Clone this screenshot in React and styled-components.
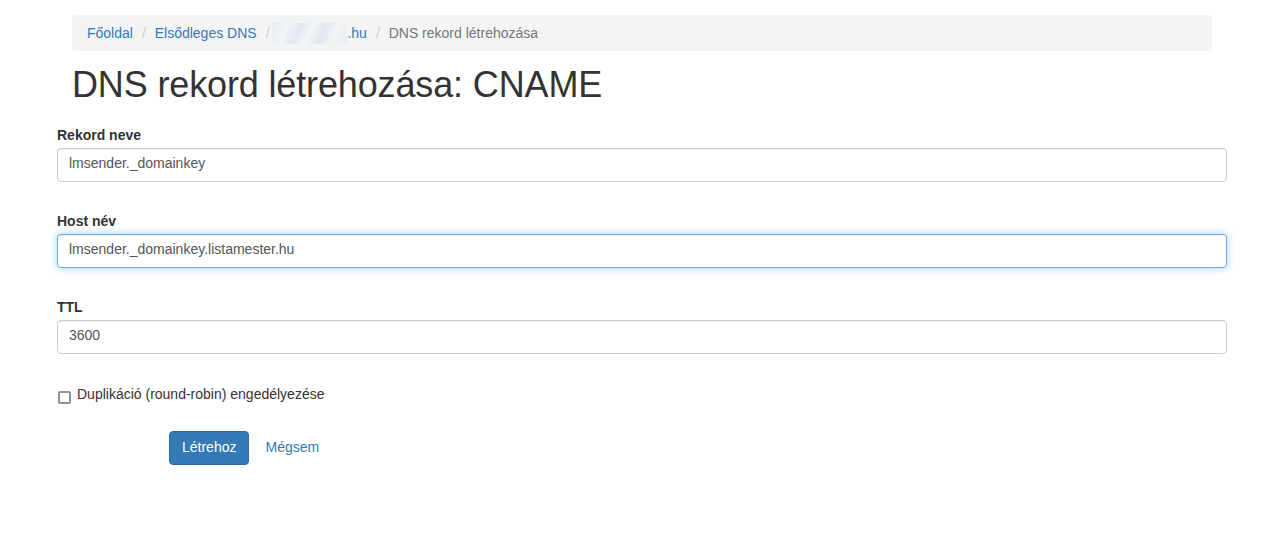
import { useEffect, useRef } from "react";
import styled, { createGlobalStyle } from "styled-components";

const GlobalStyle = createGlobalStyle`
  * { box-sizing: border-box; }
  body {
    margin: 0;
    background: #fff;
    font-family: "Liberation Sans", Arial, sans-serif;
    font-size: 14px;
    line-height: 1.42857;
    color: #333;
  }
`;

const Page = styled.div`
  width: 1170px;
  margin-left: 57px;
  padding-top: 15px;
`;

const Breadcrumb = styled.ol`
  list-style: none;
  margin: 0 15px;
  padding: 8px 15px;
  height: 36px;
  line-height: 20px;
  background: #f4f4f4;
  border-radius: 4px;
`;

const Crumb = styled.li`
  display: inline;
  color: ${(p) => (p.$active ? "#777" : "#337ab7")};

  & + li::before {
    content: "/\\00a0";
    padding: 0 5px 0 9px;
    color: #ccc;
  }
`;

const CrumbLink = styled.a`
  color: #337ab7;
  text-decoration: none;
`;

/* the domain name is blurred out in the original */
const Blurred = styled.span`
  display: inline-block;
  width: 75px;
  height: 21px;
  margin-left: -6px;
  vertical-align: -6px;
  background: linear-gradient(
    115deg,
    #e6ebf1 0%,
    #f1f4f8 20%,
    #e4e9f0 35%,
    #f3f5f8 50%,
    #e3e8ef 65%,
    #f2f4f7 80%,
    #e8ecf2 100%
  );
`;

const Title = styled.h1`
  margin: 14px 15px 0;
  font-size: 36px;
  font-weight: 400;
  line-height: 1.1;
  letter-spacing: -0.14px;
  color: #333;
`;

const Form = styled.form`
  margin-top: 20px;
`;

const Group = styled.div`
  margin-bottom: ${(p) => p.$gap ?? 29}px;
`;

const Label = styled.label`
  display: block;
  font-weight: 700;
  margin-bottom: 3px;
  line-height: 20px;
`;

const Input = styled.input`
  display: block;
  width: 100%;
  height: 34px;
  padding: 4px 11px 7px;
  font: inherit;
  font-size: 14px;
  color: #555;
  background: #fff;
  border: 1px solid ${(p) => (p.$focused ? "#66afe9" : "#ccc")};
  border-radius: 4px;
  box-shadow: ${(p) =>
    p.$focused
      ? "inset 0 1px 1px rgba(0,0,0,.075), 0 0 8px rgba(102,175,233,.6)"
      : "inset 0 1px 1px rgba(0,0,0,.075)"};
  outline: none;
  caret-color: #333;
`;

const CheckRow = styled.label`
  display: flex;
  align-items: flex-start;
  gap: 6px;
  margin-top: 30px;
  line-height: 20px;
  cursor: pointer;
`;

const Check = styled.input`
  appearance: none;
  flex: none;
  width: 13px;
  height: 13px;
  margin: 7px 0 0 1px;
  border: 2px solid #8f8f9d;
  border-radius: 2px;
  background: #fff;
`;

const Actions = styled.div`
  display: flex;
  align-items: center;
  gap: 4px;
  margin-top: 27px;
  padding-left: 112px;
`;

const Button = styled.button`
  height: 34px;
  padding: 6px 12px;
  font: inherit;
  font-size: 14px;
  color: #fff;
  background: #337ab7;
  border: 1px solid #2e6da4;
  border-radius: 4px;
  cursor: pointer;
`;

const LinkButton = styled.a`
  padding: 6px 12px;
  color: #337ab7;
  text-decoration: none;
`;

export default function App() {
  const hostRef = useRef(null);

  useEffect(() => {
    const el = hostRef.current;
    if (el) {
      el.focus();
      el.setSelectionRange(el.value.length, el.value.length);
    }
  }, []);

  return (
    <>
      <GlobalStyle />
      <Page>
        <Breadcrumb>
          <Crumb>
            <CrumbLink href="#">Főoldal</CrumbLink>
          </Crumb>
          <Crumb>
            <CrumbLink href="#">Elsődleges DNS</CrumbLink>
          </Crumb>
          <Crumb>
            <CrumbLink href="#">
              <Blurred />
              .hu
            </CrumbLink>
          </Crumb>
          <Crumb $active>DNS rekord létrehozása</Crumb>
        </Breadcrumb>

        <Title>DNS rekord létrehozása: CNAME</Title>

        <Form onSubmit={(e) => e.preventDefault()}>
          <Group>
            <Label htmlFor="name">Rekord neve</Label>
            <Input id="name" defaultValue="lmsender._domainkey" />
          </Group>
          <Group>
            <Label htmlFor="host">Host név</Label>
            <Input
              id="host"
              ref={hostRef}
              $focused
              defaultValue="lmsender._domainkey.listamester.hu"
            />
          </Group>
          <Group $gap={0}>
            <Label htmlFor="ttl">TTL</Label>
            <Input id="ttl" defaultValue="3600" />
          </Group>

          <CheckRow>
            <Check type="checkbox" />
            Duplikáció (round-robin) engedélyezése
          </CheckRow>

          <Actions>
            <Button type="submit">Létrehoz</Button>
            <LinkButton href="#">Mégsem</LinkButton>
          </Actions>
        </Form>
      </Page>
    </>
  );
}
